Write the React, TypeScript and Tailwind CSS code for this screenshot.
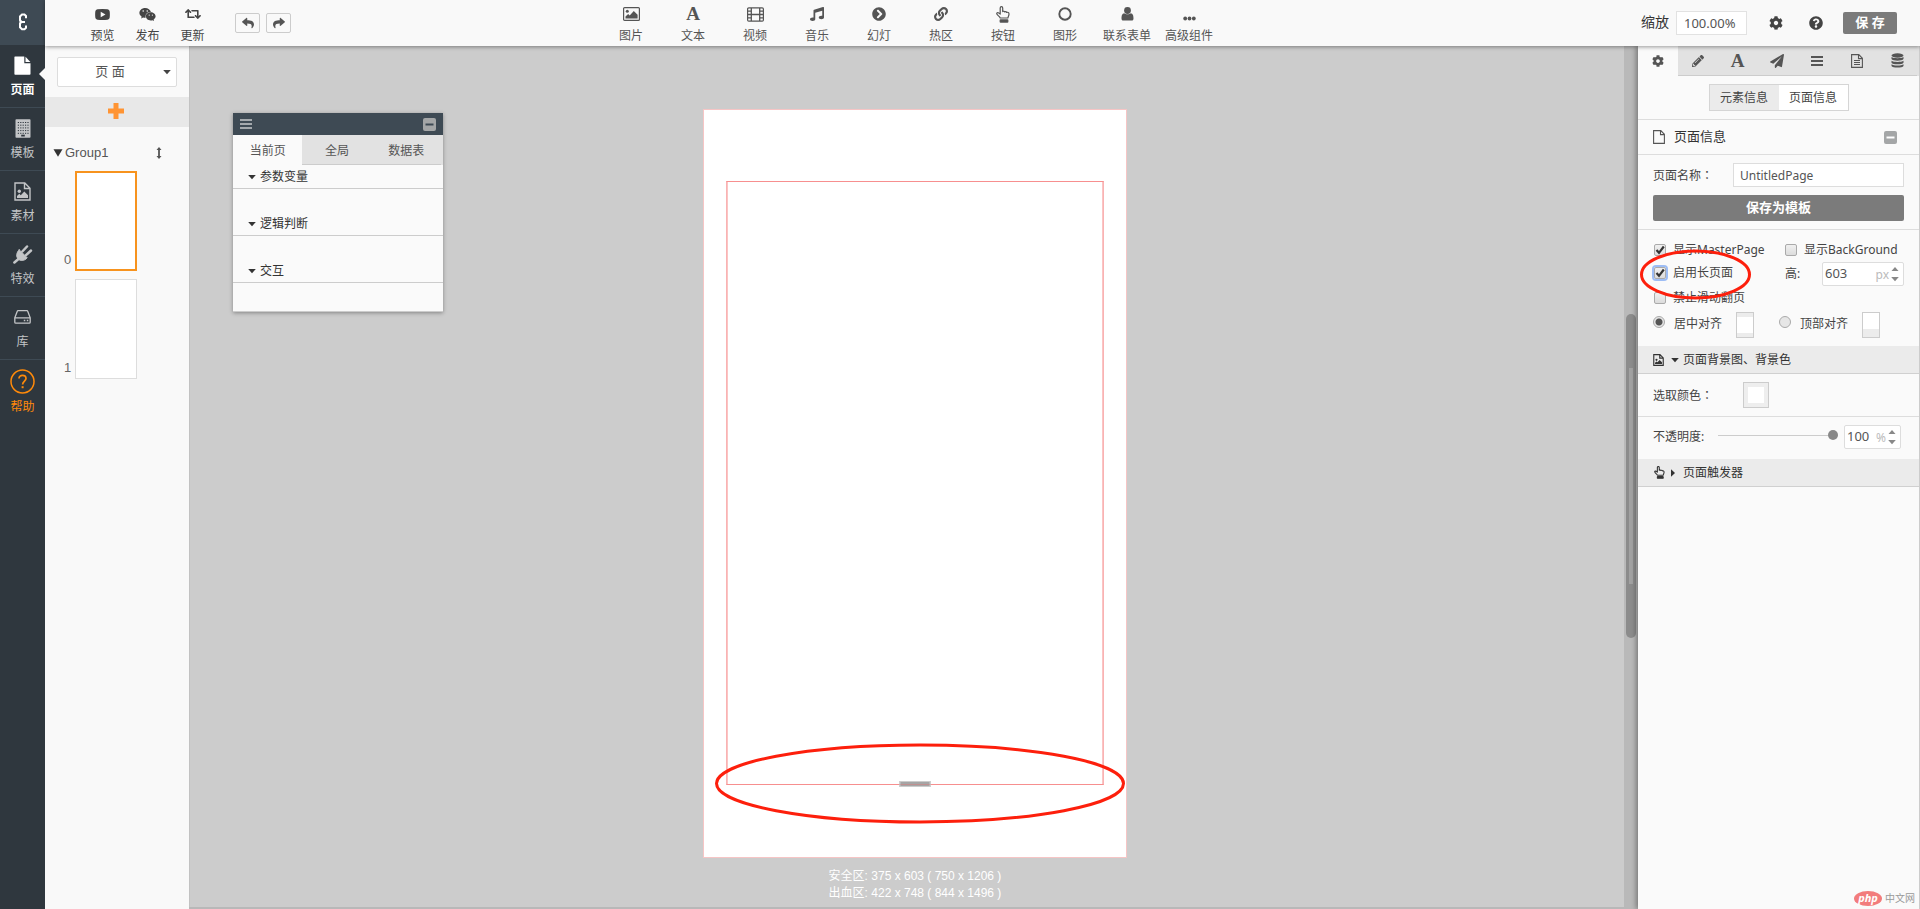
import type { ReactNode } from "react";
import {
  FaChevronCircleRight,
  FaCog,
  FaLink,
  FaMusic,
  FaPaperPlane,
  FaPencilAlt,
  FaQuestionCircle,
  FaReply,
  FaRetweet,
  FaShare,
  FaWeixin,
} from "react-icons/fa";

const cjk = "font-['Liberation_Sans','Noto_Sans_CJK_SC',sans-serif]";
const humanist = "font-['Noto_Sans','Noto_Sans_CJK_SC',sans-serif]";

function Logo() {
  return (
    <svg width="10" height="18" viewBox="0 0 10 18" fill="none" stroke="#fff" strokeWidth="2">
      <path d="M8 5.200V3L6.500 1.500H4L2 3.500v3.700L3.600 8.900H7M3.600 8.900L2 10.600v3.700l2 2h2.500L8 14.800v-2.200" />
      <path d="M2 6v6" strokeWidth="1" />
    </svg>
  );
}

function LetterIcon() {
  return <span aria-hidden="true" className="font-['Liberation_Serif',serif] text-[19px] leading-[18px] font-bold">A</span>;
}

function PlayIcon() {
  return (
    <svg width="15" height="11" viewBox="0 0 15 11" fill="currentColor" fillRule="evenodd">
      <path d="M2.500.300Q7.500-.100 12.500.300q2 .200 2.200 2.200.300 3 0 6-.200 2-2.200 2.200-5 .400-10 0-2-.200-2.200-2.200-.300-3 0-6Q.500.500 2.500.300zM5.700 2.800v5.400l4.800-2.700z" />
    </svg>
  );
}

function ImageIcon() {
  return (
    <svg width="17" height="14" viewBox="0 0 17 14">
      <rect x=".6" y=".6" width="15.800" height="12.800" rx="1" fill="none" stroke="currentColor" strokeWidth="1.200" />
      <circle cx="4.300" cy="4.200" r="1.500" fill="currentColor" />
      <path d="M2.500 11.500V9.600L5.200 7l1.500 1.400L10.800 4l3.800 3.800v3.700z" fill="currentColor" />
    </svg>
  );
}

function FilmIcon() {
  return (
    <svg width="17" height="15" viewBox="0 0 17 15" fill="none" stroke="currentColor">
      <rect x=".6" y=".8" width="15.800" height="13.400" rx="1.200" strokeWidth="1.200" />
      <path d="M4.300 1v13M12.700 1v13M4.300 7.500h8.400" strokeWidth="1.300" />
      <path d="M1 4.100h3.300M1 7.500h3.300M1 10.900h3.300M12.700 4.100H16M12.700 7.500H16M12.700 10.900H16" strokeWidth="1.300" />
    </svg>
  );
}

function HandIcon({ small = false }: { small?: boolean }) {
  return (
    <svg width={small ? 11 : 14} height={small ? 13 : 17} viewBox="0 0 14 17" fill="none" stroke="currentColor" strokeWidth={small ? 1.4 : 1.2}>
      <path d="M4.200 12C3.800 10.500.700 9 .700 7.500c0-1.100 1.500-1.200 3.500.600V2c0-1.800 2.500-1.800 2.500 0v3.600c.800-.600 1.700-.400 2 .300.800-.500 1.700-.200 2 .500 1.100-.400 2.300.200 2.300 1.500 0 2-.900 2.700-1.100 4.100z" strokeLinejoin="round" />
      <rect x="4.200" y="13.900" width="7.600" height="2.200" rx=".4" fill="currentColor" />
    </svg>
  );
}

function RingIcon() {
  return (
    <svg width="14" height="14" viewBox="0 0 14 14" fill="none" stroke="currentColor" strokeWidth="1.900">
      <circle cx="7" cy="7" r="5.700" />
    </svg>
  );
}

function PersonIcon() {
  return (
    <svg width="13" height="14" viewBox="0 0 13 14" fill="currentColor">
      <circle cx="6.500" cy="3.500" r="3.400" />
      <path d="M3.300 6.200C.9 6.500.5 9 .5 11.400c0 1.500.9 2.200 2 2.200h8c1.100 0 2-.7 2-2.200 0-2.400-.4-4.900-2.800-5.200-1.600 1.500-4.800 1.500-6.400 0z" />
    </svg>
  );
}

function DotsIcon() {
  return (
    <svg width="13" height="5" viewBox="0 0 13 5" fill="currentColor">
      <circle cx="2.200" cy="2.500" r="1.900" />
      <circle cx="6.500" cy="2.500" r="1.900" />
      <circle cx="10.800" cy="2.500" r="1.900" />
    </svg>
  );
}

function FileIcon({ lines = false }: { lines?: boolean }) {
  return (
    <svg width="12" height="14" viewBox="0 0 12 14" fill="none" stroke="currentColor" strokeWidth="1.100">
      <path d="M.6.600h7.200l3.600 3.700v9.100H.6zM7.500.600v4h3.900" />
      {lines && <path d="M3 6.500h6M3 8.500h6M3 10.500h6" strokeWidth="1" />}
    </svg>
  );
}

function BarsIcon() {
  return (
    <svg width="12" height="10" viewBox="0 0 12 10" stroke="currentColor" strokeWidth="2">
      <path d="M0 1h12M0 5h12M0 9h12" />
    </svg>
  );
}

function PageIcon() {
  return (
    <svg width="17" height="19" viewBox="0 0 17 19" fill="currentColor">
      <path d="M1 .5h9.300v6.700H16.500V18a.8.800 0 0 1-.8.800H1.200A.8.800 0 0 1 .4 18V1A.6.600 0 0 1 1 .5z" />
      <path d="M11.500.7l4.900 5.200h-4.900z" />
    </svg>
  );
}

function BuildingIcon() {
  return (
    <svg width="16" height="19" viewBox="0 0 16 19">
      <rect x=".5" y=".3" width="15" height="18.400" rx=".8" fill="currentColor" />
      <path d="M2.800 3.500h11M2.800 6.200h11M2.800 8.900h11M2.800 11.600h11M2.800 14.300h11" stroke="#2f373e" strokeWidth="1" strokeDasharray="1.200 1.200" />
      <path d="M6.200 15.700h3.600v1.800H6.200z" fill="#2f373e" />
    </svg>
  );
}

function FileImageIcon({ small = false }: { small?: boolean }) {
  return (
    <svg width={small ? 11 : 17} height={small ? 12 : 19} viewBox="0 0 17 19">
      <path d="M1 1h9.800L16 6.200V18H1zM10.500 1v5.500H16" fill="none" stroke="currentColor" strokeWidth={small ? 1.8 : 1.4} />
      <circle cx="5.300" cy="9.300" r="1.700" fill="currentColor" />
      <path d="M3 16v-2l2.300-2.200 1.500 1.400L10.300 9.500l3.700 3.700V16z" fill="currentColor" />
    </svg>
  );
}

function PlugIcon() {
  return (
    <svg width="20" height="20" viewBox="0 0 20 20" fill="none" stroke="currentColor" strokeLinecap="round">
      <path d="M6.200 5.800l8 8c-2.800 3.200-6.500 3.500-8.800 1.400-2.600-2.500-2.200-6.400.8-9.400z" fill="currentColor" strokeWidth="1" />
      <path d="M9.300 7.500l4.700-5M13 11.200l5-4.700" strokeWidth="2.500" />
      <path d="M6 14.500l-4.600 4" strokeWidth="2.500" />
    </svg>
  );
}

function DriveIcon() {
  return (
    <svg width="17" height="14" viewBox="0 0 17 14" fill="none" stroke="currentColor" strokeWidth="1.300">
      <path d="M.8 7.800L3.300 1.200Q3.500.7 4 .7h9q.5 0 .7.500l2.500 6.600v4.400q0 1-1 1H1.800q-1 0-1-1zM.8 7.800h15.400" />
      <path d="M9.800 10.500h1.500M12.800 10.500h1.500" strokeWidth="1.500" />
    </svg>
  );
}

function HelpIcon() {
  return (
    <svg width="25" height="25" viewBox="0 0 25 25" fill="none" stroke="currentColor">
      <circle cx="12.500" cy="12.500" r="11.500" strokeWidth="1.500" />
      <path d="M9 9.600c0-4.400 7-4.300 7 0 0 2.500-3.400 2.700-3.400 6" strokeWidth="1.700" />
      <path d="M12.600 17.200v2" strokeWidth="2" />
    </svg>
  );
}

function StackIcon() {
  return (
    <svg width="13" height="15" viewBox="0 0 13 15" fill="currentColor">
      <ellipse cx="6.500" cy="2.500" rx="6" ry="2.200" />
      <path d="M.5 4.100c2 1.600 10 1.600 12 0v2c-1 2.100-11 2.100-12 0z" />
      <path d="M.5 7.700c2 1.600 10 1.600 12 0v2c-1 2.100-11 2.100-12 0z" />
      <path d="M.5 11.300c2 1.600 10 1.600 12 0v1.700c-1 2.100-11 2.100-12 0z" />
    </svg>
  );
}

function Caret({ dir = "down", large = false }: { dir?: "down" | "right" | "up"; large?: boolean }) {
  const size = large ? 10 : 8;
  return (
    <svg width={size} height={size} viewBox="0 0 8 8" fill="currentColor" className="shrink-0">
      {dir === "down" && <path d={large ? "M.4 1h7.200L4 7z" : "M.2 2h7.600L4 6.200z"} />}
      {dir === "up" && <path d="M.5 6h7L4 2z" />}
      {dir === "right" && <path d="M2 .3v7.400L6 4z" />}
    </svg>
  );
}

function MinusBox({ light = false }: { light?: boolean }) {
  return (
    <button type="button" aria-label="收起" className={light ? "text-[#3e4a54]" : "text-white"}>
      <svg width="13" height="13" viewBox="0 0 13 13">
        <rect width="13" height="13" rx="2" fill="#a4a6a7" />
        <path d="M2.500 6.500h8" stroke="currentColor" strokeWidth="2" />
      </svg>
    </button>
  );
}

function Colon() {
  return <span className="font-['Noto_Sans_CJK_TC',sans-serif]">：</span>;
}

function NavItem({ icon, label, active = false, tone }: { icon: ReactNode; label: string; active?: boolean; tone: string }) {
  return (
    <a href="#" className={`relative flex h-[63px] flex-col items-center border-b border-[#3e4a54] pt-2 text-xs ${tone}`}>
      <span className="flex h-6 items-center">{icon}</span>
      <span className={`mt-1 leading-[18px] ${active ? "font-bold" : ""}`}>{label}</span>
      {active && (
        <svg width="6" height="12" viewBox="0 0 6 12" className="absolute top-[23px] right-0 fill-[#f9f9f9]">
          <path d="M6 0v12L0 6z" />
        </svg>
      )}
    </a>
  );
}

function Tool({ icon, label, wide = false }: { icon: ReactNode; label: string; wide?: boolean }) {
  return (
    <button type="button" className={`flex flex-col items-center ${wide ? "w-[62px]" : "w-[45px]"}`}>
      <span className="flex h-[18px] items-center text-[14px]">{icon}</span>
      <span className="mt-1 text-xs leading-[18px] whitespace-nowrap">{label}</span>
    </button>
  );
}

const tools = [
  { label: "图片", icon: <ImageIcon /> },
  { label: "文本", icon: <LetterIcon /> },
  { label: "视频", icon: <FilmIcon /> },
  { label: "音乐", icon: <FaMusic /> },
  { label: "幻灯", icon: <FaChevronCircleRight /> },
  { label: "热区", icon: <FaLink /> },
  { label: "按钮", icon: <HandIcon /> },
  { label: "图形", icon: <RingIcon /> },
  { label: "联系表单", icon: <PersonIcon /> },
  { label: "高级组件", icon: <span className="pt-2"><DotsIcon /></span> },
];

function Header() {
  return (
    <header className="relative z-20 flex h-[46px] shrink-0 bg-[#f9f9f9] text-[#555] shadow-[0_1px_4px_rgba(0,0,0,0.4)]">
      <div className="flex pt-[5px] pl-[35px] text-[#444]">
        <Tool label="预览" icon={<PlayIcon />} />
        <Tool label="发布" icon={<FaWeixin size={17} />} />
        <Tool label="更新" icon={<FaRetweet size={16} />} />
      </div>
      <div className="flex items-center gap-[6px] pl-5 text-[12px]">
        <button type="button" aria-label="撤销" className="flex h-5 w-[25px] items-center justify-center rounded-[2px] border border-[#ccc]">
          <FaReply />
        </button>
        <button type="button" aria-label="重做" className="flex h-5 w-[25px] items-center justify-center rounded-[2px] border border-[#ccc]">
          <FaShare />
        </button>
      </div>
      <div className="ml-[309px] flex pt-[5px]">
        {tools.map((t) => (
          <Tool key={t.label} wide label={t.label} icon={t.icon} />
        ))}
      </div>
      <div className="ml-auto flex items-center pr-[23px] pb-px">
        <label htmlFor="zoom" className="text-[14px] text-[#333]">缩放</label>
        <input id="zoom" defaultValue="100.00%" className={`ml-[7px] h-6 w-[71px] border border-[#e2e2e2] bg-white px-[7px] text-[13px] text-[#555] ${humanist}`} />
        <button type="button" aria-label="设置" className="ml-[22px] text-[#444]"><FaCog size={14} /></button>
        <button type="button" aria-label="帮助" className="ml-[26px] text-[#444]"><FaQuestionCircle size={14} /></button>
        <button type="button" className="ml-5 h-[22px] w-[54px] rounded-[2px] bg-[#7b7b7b] text-[13px] font-bold text-white">保 存</button>
      </div>
    </header>
  );
}

function Thumb({ index, selected = false }: { index: number; selected?: boolean }) {
  return (
    <div className="flex items-end gap-1 pl-[19px] text-[13px] text-[#666]">
      <span className="w-[7px] pb-[2px]">{index}</span>
      <div className={`h-[100px] w-[62px] bg-white ${selected ? "border-2 border-[#f7931e]" : "border border-[#ddd]"}`} />
    </div>
  );
}

function PagesPanel() {
  return (
    <aside className="w-36 shrink-0 bg-[#f9f9f9] pt-[11px]">
      <div className="relative mx-3 flex items-center">
        <select aria-label="页面类型" className="h-[30px] w-full appearance-none rounded-[2px] border border-[#ddd] bg-white pr-[14px] text-center text-[13px] text-[#555]">
          <option>页 面</option>
        </select>
        <span className="pointer-events-none absolute right-[6px] text-[#444]"><Caret /></span>
      </div>
      <button type="button" aria-label="添加页面" className="mt-[10px] flex h-[30px] w-full items-center justify-center bg-[#e8e8e8] pr-[2px] pb-[2px] text-[#ff9433]">
        <svg width="16" height="16" viewBox="0 0 16 16" fill="currentColor"><path d="M5.500 0h5v5.500H16v5h-5.500V16h-5v-5.500H0v-5h5.500z" /></svg>
      </button>
      <div className="mt-4 flex h-5 items-center pl-2 text-[13px] text-[#555]">
        <span className="text-[#333]"><Caret large /></span>
        <span className="ml-[2px]">Group1</span>
        <svg width="6" height="12" viewBox="0 0 6 12" fill="currentColor" className="ml-auto mr-[27px]">
          <path d="M3 0l2.500 3H3.900v6h1.600L3 12 .5 9h1.600V3H.5z" />
        </svg>
      </div>
      <div className="mt-2 flex flex-col gap-2">
        <Thumb index={0} selected />
        <Thumb index={1} />
      </div>
    </aside>
  );
}

function LogicWindow() {
  return (
    <section className="absolute top-[67px] left-11 w-[210px] border-b border-[#ccc] bg-[#fafafa] text-xs text-[#555] shadow-[0_1px_4px_rgba(0,0,0,0.35)]">
      <div className="flex h-[22px] items-center justify-between bg-[#3e4a54] px-[7px] text-[#a4a9ad]">
        <BarsIcon />
        <MinusBox light />
      </div>
      <div className="grid h-[30px] grid-cols-3 bg-[#e2e2e2] pr-[2px]">
        <button type="button" className="bg-[#fafafa] pt-px">当前页</button>
        <button type="button" className="border-b border-[#ccc] pt-[2px]">全局</button>
        <button type="button" className="border-b border-[#ccc] pt-[2px]">数据表</button>
      </div>
      {["参数变量", "逻辑判断", "交互"].map((name) => (
        <div key={name} className="pb-[23px] last:pb-[28px]">
          <button type="button" className="flex h-6 w-full items-center gap-1 border-b border-[#ccc] pl-[15px] text-[#333]">
            <Caret />
            {name}
          </button>
        </div>
      ))}
    </section>
  );
}

function Canvas() {
  return (
    <main className="relative flex min-w-0 flex-1 flex-col border-b-2 border-[#b8b8b8] bg-[#ccc]">
      <div className="flex flex-1">
        <div className="flex flex-1 flex-col items-center border-l border-[#c2c2c2] pt-[63px] pl-4">
          <div className="h-[749px] w-[424px] shrink-0 border border-[#f6c5c5] bg-white px-[22px] pt-[71px]">
            <div className="relative h-[604px] border border-[#f78f8f] border-x-[#f9b3b3] shadow-[inset_1px_0_#fbc4c4,inset_-1px_0_#fbc4c4]">
              <div className="absolute -bottom-[3px] left-1/2 flex h-[6px] w-[31px] -translate-x-1/2 items-center border border-[#ccc] bg-[#a5a5a5]">
                <span className="h-px w-full bg-[#c09090]" />
              </div>
              <svg className="absolute -bottom-[40px] -left-3" width="410" height="81" viewBox="0 0 410 81" fill="none">
                <ellipse cx="205" cy="40.500" rx="203.500" ry="38.500" stroke="#fd1f0c" strokeWidth="3" />
              </svg>
            </div>
          </div>
          <p className="mt-[10px] text-center text-xs leading-[17px] text-white">
            安全区: 375 x 603 ( 750 x 1206 )
            <br />
            出血区: 422 x 748 ( 844 x 1496 )
          </p>
        </div>
        <div className="flex w-[14px] flex-col items-center bg-[#b9b9b9] pt-[268px]">
          <div className="flex h-[324px] w-[10px] justify-center rounded-full bg-[#8c8c8c] pt-[54px]">
            <div className="h-[216px] w-1 bg-[#a2a2a2]" />
          </div>
        </div>
      </div>
      <LogicWindow />
    </main>
  );
}

function Tick({ id, label, checked = false, focused = false }: { id: string; label: string; checked?: boolean; focused?: boolean }) {
  return (
    <div className="flex items-center gap-[7px]">
      <span className={`relative flex rounded-[2px] ${focused ? "shadow-[0_0_0_2px_#9dbdf5]" : ""}`}>
        <input id={id} type="checkbox" defaultChecked={checked} className="peer size-3 appearance-none rounded-[2px] border border-[#aaa] bg-linear-to-b from-[#f0f0f0] to-[#dcdcdc]" />
        <svg width="12" height="12" viewBox="0 0 12 12" fill="none" stroke="#333" strokeWidth="2.200" className="pointer-events-none absolute top-0 left-0 hidden peer-checked:block">
          <path d="M2.500 6l2.500 2.800L9.800 2.500" />
        </svg>
      </span>
      <label htmlFor={id} className="whitespace-nowrap">{label}</label>
    </div>
  );
}

function AlignOption({ id, label, checked = false, children }: { id: string; label: string; checked?: boolean; children: ReactNode }) {
  return (
    <div className="flex items-center">
      <input
        id={id}
        name="align"
        type="radio"
        defaultChecked={checked}
        className="mb-[6px] size-3 appearance-none rounded-full border border-[#aaa] bg-[#e6e6e6] checked:bg-[radial-gradient(circle,#555_0_3px,#e6e6e6_4px)]"
      />
      <label htmlFor={id} className="mb-[2px] ml-[9px]">{label}</label>
      <span className="ml-[14px] flex h-[26px] w-[18px] flex-col border border-[#ccc] bg-[#ececec]">{children}</span>
    </div>
  );
}

function Stepper({ id, label, value, unit, width }: { id: string; label?: string; value: string; unit: string; width: string }) {
  return (
    <div className={`flex h-6 items-center rounded-[2px] border border-[#ddd] bg-white pr-1 pl-[2px] ${width}`}>
      <input id={id} aria-label={label} defaultValue={value} className="w-full min-w-0 text-[13px] text-[#555]" />
      <span className="mr-[2px] pt-[2px] text-[#bbb]">{unit}</span>
      <span className="flex flex-col gap-[2px] text-[#888]">
        <button type="button" aria-label="增加"><Caret dir="up" /></button>
        <button type="button" aria-label="减少"><Caret /></button>
      </span>
    </div>
  );
}

const panelTabs = [
  { label: "设置", icon: <FaCog size={12} /> },
  { label: "编辑", icon: <FaPencilAlt size={12} /> },
  { label: "文字", icon: <LetterIcon /> },
  { label: "动作", icon: <FaPaperPlane size={14} /> },
  { label: "列表", icon: <BarsIcon /> },
  { label: "文档", icon: <FileIcon lines /> },
  { label: "数据", icon: <StackIcon /> },
];

function Inspector() {
  return (
    <aside className={`relative z-10 flex w-[282px] shrink-0 flex-col border-r border-[#ccc] bg-[#fafafa] text-xs text-[#444] shadow-[-2px_0_5px_rgba(0,0,0,0.35)] ${humanist}`}>
      <div className="grid h-[30px] shrink-0 grid-cols-7 bg-[#e2e2e2] pr-[2px] text-[#555]">
        {panelTabs.map((t, i) => (
          <button key={t.label} type="button" aria-label={t.label} className={`flex items-center justify-center ${i === 0 ? "bg-[#fafafa]" : "border-b border-[#ccc]"}`}>
            {t.icon}
          </button>
        ))}
      </div>
      <div className="flex h-[44px] shrink-0 justify-center border-b border-[#ddd] pt-2">
        <div className="flex h-[27px] w-[140px] border border-[#d5d5d5]">
          <button type="button" className="flex-1 bg-[#ebebeb]">元素信息</button>
          <button type="button" className="flex-1 bg-white">页面信息</button>
        </div>
      </div>
      <div className="flex h-[35px] shrink-0 items-center border-b border-[#ddd] pr-[22px] pl-[15px]">
        <span className="text-[#555]"><FileIcon /></span>
        <h2 className="mr-auto ml-[9px] text-[13px] text-[#333]">页面信息</h2>
        <MinusBox />
      </div>
      <div className="shrink-0 border-b border-[#ddd] px-[15px] pt-2 pb-2">
        <div className="flex h-6 items-center justify-between">
          <label htmlFor="page-name">页面名称<Colon /></label>
          <input id="page-name" defaultValue="UntitledPage" className="h-6 w-[171px] border border-[#ddd] bg-white px-[6px] text-[#555]" />
        </div>
        <button type="button" className="mt-2 h-[26px] w-full rounded-[2px] bg-[#7b7b7b] text-[13px] font-bold text-white">保存为模板</button>
      </div>
      <div className="relative shrink-0 px-4 pt-2 pb-[7px]">
        <div className="grid grid-cols-[131px_1fr] items-center">
          <div className="flex h-6 items-center"><Tick id="master" label="显示MasterPage" checked /></div>
          <Tick id="background" label="显示BackGround" />
          <div className="flex h-6 items-center pb-[2px]"><Tick id="long-page" label="启用长页面" checked focused /></div>
          <div className="-mr-px flex h-6 items-center justify-between">
            <label htmlFor="page-height">高:</label>
            <Stepper id="page-height" value="603" unit="px" width="w-[82px]" />
          </div>
          <div className="col-span-2 flex h-6 items-center"><Tick id="no-swipe" label="禁止滑动翻页" /></div>
        </div>
        <div className="-ml-px grid h-[29px] grid-cols-[126px_1fr] items-center">
          <AlignOption id="align-center" label="居中对齐" checked>
            <span className="my-1 flex-1 bg-white" />
          </AlignOption>
          <AlignOption id="align-top" label="顶部对齐">
            <span className="mb-2 flex-1 bg-white" />
          </AlignOption>
        </div>
        <svg className="pointer-events-none absolute top-[19px] left-[2px]" width="111" height="51" viewBox="0 0 111 51" fill="none">
          <ellipse cx="55.500" cy="25.500" rx="54" ry="23.500" stroke="#fd1f0c" strokeWidth="3" />
        </svg>
      </div>
      <button type="button" className="flex h-7 shrink-0 items-center border-b border-[#d0d0d0] bg-[#ebebeb] pl-[15px] text-[#333]">
        <FileImageIcon small />
        <span className="ml-[7px]"><Caret /></span>
        <span className="ml-1">页面背景图、背景色</span>
      </button>
      <div className="flex h-[43px] shrink-0 items-center border-b border-[#ddd] px-[15px]">
        <label htmlFor="page-color" className="w-[90px]">选取颜色<Colon /></label>
        <button id="page-color" type="button" className="size-[26px] border border-[#ccc] bg-[#eee] p-1">
          <span className="block size-full bg-white" />
        </button>
      </div>
      <div className="flex h-[42px] shrink-0 items-center px-[15px] pb-[2px]">
        <label htmlFor="opacity" className="w-[65px]">不透明度:</label>
        <input
          id="opacity"
          type="range"
          defaultValue={100}
          className="mr-[6px] mb-1 h-[10px] w-[120px] appearance-none bg-[linear-gradient(#ccc,#ccc)] bg-[length:100%_1px] bg-center bg-no-repeat [&::-webkit-slider-thumb]:size-[10px] [&::-webkit-slider-thumb]:appearance-none [&::-webkit-slider-thumb]:rounded-full [&::-webkit-slider-thumb]:bg-[#888]"
        />
        <Stepper id="opacity-value" label="不透明度" value="100" unit="%" width="w-[57px]" />
      </div>
      <button type="button" className="flex h-7 shrink-0 items-center border-b border-[#d0d0d0] bg-[#ebebeb] pl-4 text-[#333]">
        <HandIcon small />
        <span className="ml-1"><Caret dir="right" /></span>
        <span className="ml-[6px]">页面触发器</span>
      </button>
      <div className="mt-auto flex items-center justify-end gap-[3px] pr-1 pb-[3px]">
        <span className="flex h-[15px] w-7 items-center justify-center rounded-[50%] bg-[#f27c7c] pb-[2px] text-[11px] leading-[12px] font-bold text-white italic">php</span>
        <span className="text-[10px] leading-[15px] text-[#999]">中文网</span>
      </div>
    </aside>
  );
}

export default function App() {
  return (
    <div className={`flex min-h-screen bg-[#ccc] ${cjk}`}>
      <nav className="w-[45px] shrink-0 bg-[#2f373e]">
        <a href="#" aria-label="首页" className="flex h-[45px] items-center justify-center bg-[#3e4a54] pb-[2px]">
          <Logo />
        </a>
        <NavItem label="页面" icon={<PageIcon />} tone="text-white" active />
        <NavItem label="模板" icon={<BuildingIcon />} tone="text-[#c3c5c7]" />
        <NavItem label="素材" icon={<FileImageIcon />} tone="text-[#c3c5c7]" />
        <NavItem label="特效" icon={<PlugIcon />} tone="text-[#c3c5c7]" />
        <NavItem label="库" icon={<DriveIcon />} tone="text-[#c3c5c7]" />
        <a href="#" className="flex flex-col items-center pt-[9px] text-xs text-[#ff8a0a]">
          <HelpIcon />
          <span className="mt-1 leading-[18px]">帮助</span>
        </a>
      </nav>
      <div className="flex min-w-0 flex-1 flex-col">
        <Header />
        <div className="flex flex-1">
          <PagesPanel />
          <Canvas />
          <Inspector />
        </div>
      </div>
    </div>
  );
}
